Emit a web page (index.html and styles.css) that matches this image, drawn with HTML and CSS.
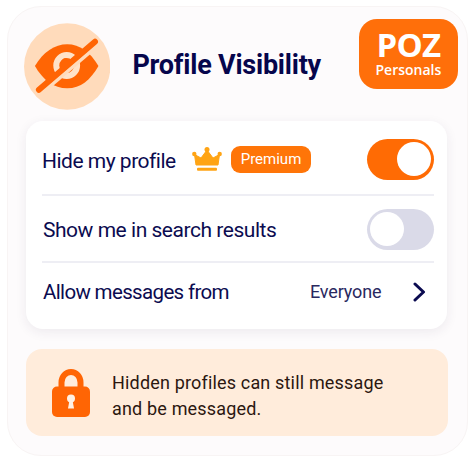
FILE: index.html
```html
<!DOCTYPE html>
<html lang="en">
<head>
<meta charset="utf-8">
<title>Profile Visibility</title>
<link rel="stylesheet" href="styles.css">
</head>
<body>
<main class="card">
  <header class="header">
    <svg class="eye" viewBox="0 0 87 87" aria-hidden="true">
      <circle cx="43.5" cy="43.5" r="43.5" fill="#ffdbbb"/>
      <path d="M11 43C19 29 31 21 43.500 21S67 29 75 43C67 57 57 65.500 43.500 65.500S19 57 11 43Z" fill="#ff6504"/>
      <circle cx="43" cy="42.500" r="10.500" fill="none" stroke="#ffe2c8" stroke-width="6"/>
      <path d="M38 39Q38 35.500 42 35Q43 39 47 38.500L39 46Z" fill="#ff6504"/>
      <path d="M17.500 70.500L76 20.500" stroke="#ffdbbb" stroke-width="4"/>
      <path d="M15 67L71.500 18.500" stroke="#ff6504" stroke-width="6" stroke-linecap="round"/>
    </svg>
    <h1 class="title">Profile Visibility</h1>
    <div class="brand"><strong class="brand-name">POZ</strong><span class="brand-sub">Personals</span></div>
  </header>
  <section class="panel">
    <div class="row row-hide">
      <span class="label label-hide">Hide my profile</span>
      <svg class="crown" viewBox="0 0 30 25" aria-hidden="true">
        <path d="M4 18L2.500 7.500L9 11L15 3L21 11L27.500 7.500L26 18Z" fill="#ffa414" stroke="#ffa414" stroke-linejoin="round"/>
        <circle cx="2.300" cy="7" r="2.200" fill="#ffa414"/>
        <circle cx="15" cy="2.500" r="2.500" fill="#ffa414"/>
        <circle cx="27.700" cy="7" r="2.200" fill="#ffa414"/>
        <rect x="5" y="20.800" width="20" height="3" rx="1" fill="#ffa414"/>
      </svg>
      <span class="premium">Premium</span>
      <span class="toggle toggle-on"><span class="knob"></span></span>
    </div>
    <div class="row row-search">
      <span class="label label-search">Show me in search results</span>
      <span class="toggle"><span class="knob"></span></span>
    </div>
    <div class="row row-messages">
      <span class="label label-messages">Allow messages from</span>
      <span class="value">Everyone</span>
      <svg class="chevron" viewBox="0 0 13 20" aria-hidden="true"><path d="M2 2L10.500 10L2 18" fill="none" stroke="#0b0b50" stroke-width="3" stroke-linecap="round" stroke-linejoin="round"/></svg>
    </div>
  </section>
  <aside class="notice">
    <svg class="lock" viewBox="0 0 38 48" aria-hidden="true">
      <path d="M9.500 21V13.500A9.500 10.500 0 0 1 28.500 13.500V21" fill="none" stroke="#ff6504" stroke-width="6"/>
      <rect y="17.500" width="38" height="30.500" rx="5" fill="#ff6504"/>
      <circle cx="19" cy="29.500" r="4" fill="#fff1e4"/>
      <path d="M17.500 31H20.500L22 39.500H16Z" fill="#fff1e4"/>
    </svg>
    <p class="notice-text"><span class="line-one">Hidden profiles can still message</span><br><span class="line-two">and be messaged.</span></p>
  </aside>
</main>
</body>
</html>
```

FILE: styles.css
```css
* { box-sizing: border-box; }
body { margin: 0; padding: 6px 6px 6px 7px; background: #fff; font-family: Roboto, "Liberation Sans", sans-serif; color: #0b0b50; }
.card { width: 461px; height: 450px; padding: 13px 9px 19px 19px; border: 1px solid #f8f4f4; border-radius: 34px; background: #fdfbfc; }
.header { display: flex; height: 101px; padding-top: 3px; margin-left: -3px; }
.eye { width: 87px; height: 87px; }
.title { margin: 26px 0 0 22px; font-size: 27px; line-height: 32px; font-weight: 700; white-space: nowrap; width: 228px; letter-spacing: -0.22px; color: #06064c; }
.brand { display: flex; flex-direction: column; align-items: center; width: 100px; height: 70px; margin-top: -4px; padding-top: 9px; border-radius: 18px; background: #ff6f0a; color: #fff; }
.brand-name { font: 700 33px/34px "Open Sans", sans-serif; letter-spacing: -0.8px; }
.brand-sub { font: 600 14px/16px "Open Sans", sans-serif; }
.panel { width: 421px; height: 208px; margin-left: -1px; padding: 0 13px 0 16px; border-radius: 17px; background: #fff; box-shadow: 0 3px 12px rgba(50, 35, 75, .08); }
.row { display: flex; align-items: center; white-space: nowrap; }
.row-hide { height: 75px; padding-top: 4px; border-bottom: 2px solid #eeeef4; }
.row-search { height: 67px; padding-top: 2px; border-bottom: 2px solid #eeeef4; }
.row-messages { height: 59px; padding-bottom: 2px; }
.label { font-size: 21px; line-height: 26px; letter-spacing: -0.5px; }
.label-hide { width: 150px; padding-top: 2px; }
.label-search { padding-left: 1px; letter-spacing: -0.47px; }
.label-messages { padding-left: 1px; font-size: 20.5px; letter-spacing: -0.65px; }
.crown { width: 30px; height: 25px; }
.premium { width: 80px; height: 27px; margin-left: 9px; border-radius: 9px; background: #ff7508; color: #fff; font-size: 15px; line-height: 27px; text-align: center; }
.toggle { width: 67px; height: 41px; margin-left: auto; padding: 3px; border-radius: 21px; background: #dadae8; flex: none; }
.toggle-on { padding-left: 30px; background: #ff6b04; }
.knob { display: block; width: 34px; height: 34px; border-radius: 50%; background: #fff; }
.value { margin-left: auto; width: 72px; font-size: 18px; letter-spacing: -0.15px; color: #29295f; }
.chevron { width: 13px; height: 20px; margin: 0 8px 0 31px; }
.notice { display: flex; width: 422px; height: 87px; margin: 20px 0 0 -1px; padding: 20px 26px; border-radius: 16px; background: #ffecdb; color: #2b1710; }
.lock { width: 38px; height: 48px; }
.notice-text { margin: 1px 0 0 22px; font-size: 18px; line-height: 26px; letter-spacing: 0.17px; white-space: nowrap; }
```
